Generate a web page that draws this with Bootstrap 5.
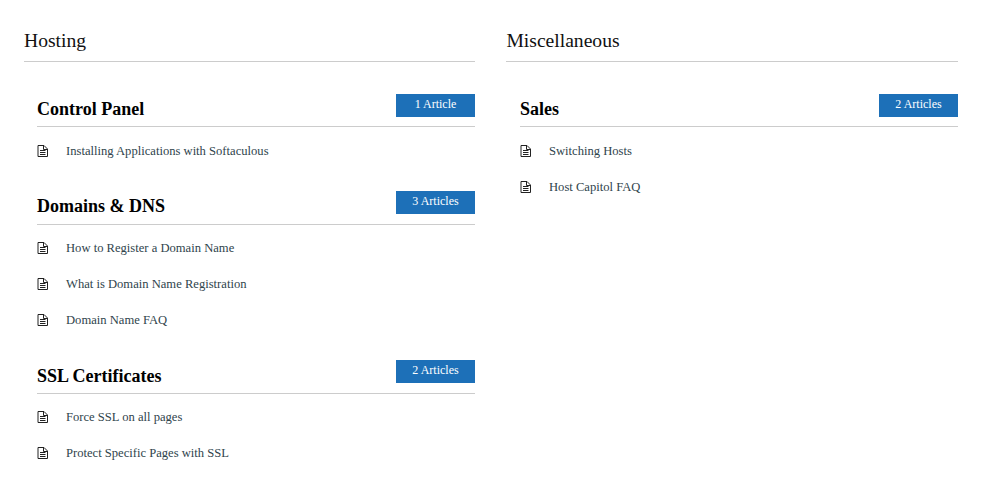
<!DOCTYPE html>
<html lang="en"><head><meta charset="utf-8"><title>Knowledge base</title>
<link href="https://cdn.jsdelivr.net/npm/bootstrap@5.3.0/dist/css/bootstrap.min.css" rel="stylesheet">
<style>
body{font-family:"Liberation Serif",serif;color:#333;background:#fff}
.kb-wrap{display:grid;grid-template-columns:451px 451.6px;column-gap:31.4px;padding:28px 42px 0 24px}
.kb-cat{font-size:19.6px;font-weight:400;line-height:26px;color:#111;margin:0;padding-bottom:7px;border-bottom:1px solid #ccc}
.kb-body{padding:32px 0 0 13px}
.kb-body-r{padding-left:13.6px}
.kb-sec{height:97px}.kb-sec-3{height:169px}
.kb-head{display:flex;justify-content:space-between;align-items:flex-start;height:33px;border-bottom:1px solid #ccc}
.kb-title{font-size:18px;font-weight:700;line-height:26px;color:#000;margin:2px 0 0}
.kb-count{display:block;width:79px;height:23px;background:#1d70b8;color:#fff;font-size:12px;line-height:20px;text-align:center;text-decoration:none}
.kb-list{list-style:none;margin:0;padding:6px 0 0}
.kb-tall .kb-head{height:34px}
.kb-tall .kb-list{padding-top:5px}
.kb-last .kb-title{margin-top:3px}
.kb-list li{display:flex;align-items:center;height:36px}
.kb-list svg{width:12px;height:13px;flex:none;margin-right:17px}
.kb-list a{color:#2f444c;font-size:12.6px;text-decoration:none}
</style></head><body>
<svg width="0" height="0" class="d-none"><symbol id="doc" viewBox="0 0 12 13"><path fill="none" stroke="#222" d="M1 .5h6l3.5 3.5v7.5H1zM6.5 .5v4h4M3 5.5h5.5M3 7.5h5.5M3 9.5h5.5"/></symbol></svg>
<div class="kb-wrap">
<section>
<h2 class="kb-cat">Hosting</h2>
<div class="kb-body">
<div class="kb-sec"><div class="kb-head"><h3 class="kb-title">Control Panel</h3><a class="kb-count" href="#">1 Article</a></div>
<ul class="kb-list"><li><svg><use href="#doc"/></svg><a href="#">Installing Applications with Softaculous</a></li></ul></div>
<div class="kb-sec-3 kb-tall"><div class="kb-head"><h3 class="kb-title">Domains &amp; DNS</h3><a class="kb-count" href="#">3 Articles</a></div>
<ul class="kb-list"><li><svg><use href="#doc"/></svg><a href="#">How to Register a Domain Name</a></li>
<li><svg><use href="#doc"/></svg><a href="#">What is Domain Name Registration</a></li>
<li><svg><use href="#doc"/></svg><a href="#">Domain Name FAQ</a></li></ul></div>
<div class="kb-tall kb-last"><div class="kb-head"><h3 class="kb-title">SSL Certificates</h3><a class="kb-count" href="#">2 Articles</a></div>
<ul class="kb-list"><li><svg><use href="#doc"/></svg><a href="#">Force SSL on all pages</a></li>
<li><svg><use href="#doc"/></svg><a href="#">Protect Specific Pages with SSL</a></li></ul></div>
</div>
</section>
<section>
<h2 class="kb-cat">Miscellaneous</h2>
<div class="kb-body kb-body-r">
<div><div class="kb-head"><h3 class="kb-title">Sales</h3><a class="kb-count" href="#">2 Articles</a></div>
<ul class="kb-list"><li><svg><use href="#doc"/></svg><a href="#">Switching Hosts</a></li>
<li><svg><use href="#doc"/></svg><a href="#">Host Capitol FAQ</a></li></ul></div>
</div>
</section>
</div>
<script src="https://cdn.jsdelivr.net/npm/bootstrap@5.3.0/dist/js/bootstrap.bundle.min.js"></script>
</body></html>
